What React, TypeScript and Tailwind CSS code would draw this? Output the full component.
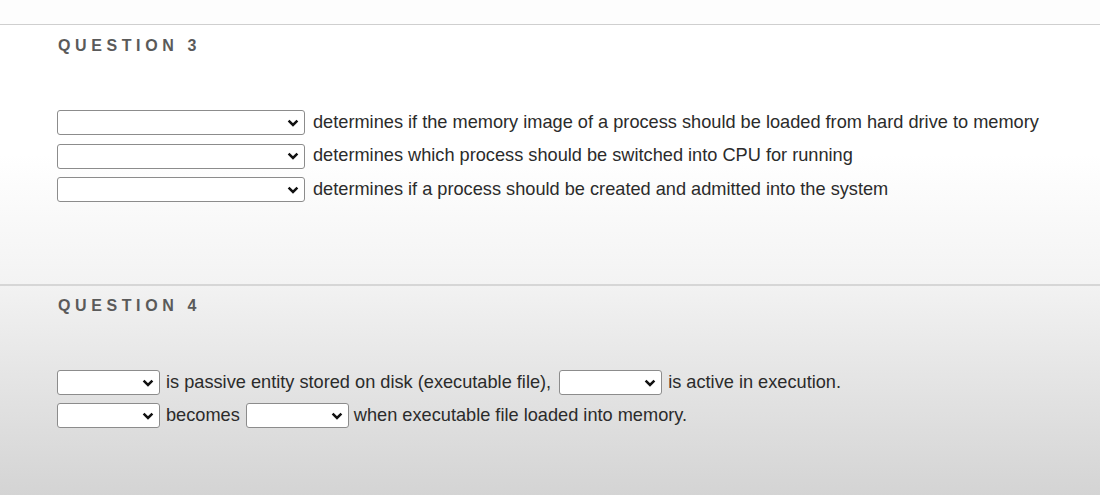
const Chevron = () => (
  <svg width="12" height="8" viewBox="0 0 12 8" className="shrink-0">
    <path d="M1.6 1.6 L6 5.9 L10.4 1.6" fill="none" stroke="#111" strokeWidth="2.5" />
  </svg>
);

const Dropdown = ({ width }: { width: string }) => (
  <div
    className={`${width} h-[25px] shrink-0 flex items-center justify-end pr-[5px] bg-white border border-[#8c8c8c] rounded-[3px]`}
  >
    <Chevron />
  </div>
);

const Heading = ({ children }: { children: React.ReactNode }) => (
  <h2 className="text-[16px] font-bold tracking-[4.6px] text-[#5a5a5a] leading-none">{children}</h2>
);

export default function App() {
  return (
    <div className="w-[1100px] h-[495px] overflow-hidden bg-white flex flex-col font-['Liberation_Sans',Arial,sans-serif] text-[#2b2b2b]">
      <div className="h-[25px] shrink-0 bg-[#fdfdfd] border-b border-[#cfcfcf]" />

      <section className="h-[259px] shrink-0 bg-gradient-to-b from-white via-white to-[#f3f3f3] pl-[58px] pt-[13px]">
        <Heading>QUESTION 3</Heading>
        <div className="mt-[56px] -ml-px flex flex-col gap-[8.5px] text-[18.2px]">
          <div className="flex items-center h-[25px]">
            <Dropdown width="w-[248px]" />
            <span className="ml-[8px]">
              determines if the memory image of a process should be loaded from hard drive to memory
            </span>
          </div>
          <div className="flex items-center h-[25px]">
            <Dropdown width="w-[248px]" />
            <span className="ml-[8px]">determines which process should be switched into CPU for running</span>
          </div>
          <div className="flex items-center h-[25px]">
            <Dropdown width="w-[248px]" />
            <span className="ml-[8px]">determines if a process should be created and admitted into the system</span>
          </div>
        </div>
      </section>

      <div className="h-[2px] shrink-0 bg-[#d6d6d6]" />

      <section className="flex-1 bg-gradient-to-b from-[#f2f2f2] to-[#d4d4d4] pl-[58px] pt-[12px]">
        <Heading>QUESTION 4</Heading>
        <div className="mt-[56px] -ml-px flex flex-col gap-[8px] text-[18.2px]">
          <div className="flex items-center h-[25px]">
            <Dropdown width="w-[103px]" />
            <span className="ml-[6px] mr-[8px]">is passive entity stored on disk (executable file),</span>
            <Dropdown width="w-[103px]" />
            <span className="ml-[6px]">is active in execution.</span>
          </div>
          <div className="flex items-center h-[25px]">
            <Dropdown width="w-[103px]" />
            <span className="ml-[6px] mr-[6px]">becomes</span>
            <Dropdown width="w-[103px]" />
            <span className="ml-[5px]">when executable file loaded into memory.</span>
          </div>
        </div>
      </section>
    </div>
  );
}
